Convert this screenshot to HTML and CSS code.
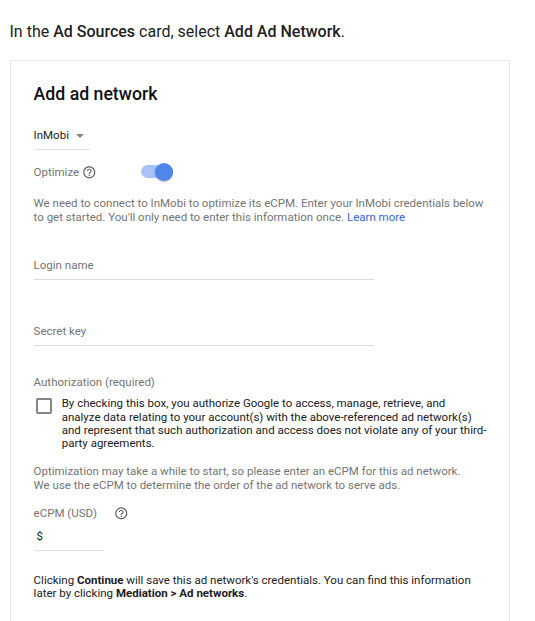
FILE: index.html
```html
<!DOCTYPE html>
<html lang="en">

<head>
  <meta charset="UTF-8">
  <meta name="viewport" content="width=device-width, initial-scale=1.0">
  <title>Add ad network</title>
  <link rel="stylesheet" href="styles.css">
</head>

<body>
  <p class="step">In the <b>Ad Sources</b> card, select <b>Add Ad Network</b>.</p>
  <div class="card">
    <h2 class="title">Add ad network</h2>
    <div class="select">InMobi <span class="arrow"></span></div>
    <div class="optimize">
      <span class="label">Optimize</span>
      <svg class="help" viewBox="0 0 24 24"><path d="M11 18h2v-2h-2v2zm1-16C6.480 2 2 6.480 2 12s4.480 10 10 10 10-4.480 10-10S17.520 2 12 2zm0 18c-4.410 0-8-3.590-8-8s3.590-8 8-8 8 3.590 8 8-3.590 8-8 8zm0-14c-2.210 0-4 1.790-4 4h2c0-1.100.9-2 2-2s2 .9 2 2c0 2-3 1.750-3 5h2c0-2.250 3-2.500 3-5 0-2.210-1.790-4-4-4z"/></svg>
      <span class="toggle"><span class="knob"></span></span>
    </div>
    <p class="note intro">We need to connect to InMobi to optimize its eCPM. Enter your InMobi credentials below<br>to get started. You'll only need to enter this information once. <a class="link">Learn more</a></p>
    <div class="field">Login name</div>
    <div class="field secret">Secret key</div>
    <div class="label auth">Authorization (required)</div>
    <div class="consent">
      <span class="checkbox"></span>
      <p class="consent-text">By checking this box, you authorize Google to access, manage, retrieve, and<br>analyze data relating to your account(s) with the above-referenced ad network(s)<br>and represent that such authorization and access does not violate any of your third-<br>party agreements.</p>
    </div>
    <p class="note wait">Optimization may take a while to start, so please enter an eCPM for this ad network.<br>We use the eCPM to determine the order of the ad network to serve ads.</p>
    <div class="ecpm">
      <span class="label">eCPM (USD)</span>
      <svg class="help" viewBox="0 0 24 24"><path d="M11 18h2v-2h-2v2zm1-16C6.480 2 2 6.480 2 12s4.480 10 10 10 10-4.480 10-10S17.520 2 12 2zm0 18c-4.410 0-8-3.590-8-8s3.590-8 8-8 8 3.590 8 8-3.590 8-8 8zm0-14c-2.210 0-4 1.790-4 4h2c0-1.100.9-2 2-2s2 .9 2 2c0 2-3 1.750-3 5h2c0-2.250 3-2.500 3-5 0-2.210-1.790-4-4-4z"/></svg>
    </div>
    <div class="price">$</div>
    <p class="footer">Clicking <b>Continue</b> will save this ad network's credentials. You can find this information<br>later by clicking <b>Mediation &gt; Ad networks</b>.</p>
  </div>
</body>

</html>
```
FILE: styles.css
```css
body {
  margin: 0;
  height: 621px;
  overflow: hidden;
  background-color: #fff;
  font-family: Roboto, sans-serif;
  font-size: 11.5px;
  line-height: 13.3px;
  color: #212121;
}

p {
  margin: 0;
  white-space: nowrap;
}

b {
  font-weight: 500;
}

.step {
  padding: 22px 0 0 9.5px;
  font-size: 16px;
  line-height: 20px;
}

.card {
  box-sizing: border-box;
  width: 500px;
  height: 580px;
  margin: 18px 0 0 10px;
  padding: 0 22.6px;
  border: 1px solid #e6e6e6;
}

.title {
  margin: 0;
  padding-top: 22px;
  font-size: 17.7px;
  font-weight: 500;
  line-height: 22px;
  color: #111;
}

.select {
  display: flex;
  align-items: center;
  justify-content: space-between;
  box-sizing: border-box;
  width: 56px;
  height: 21px;
  margin-top: 24px;
  padding: 0 6px 7px 0;
  border-bottom: 1px solid #e0e0e0;
}

.arrow {
  border: 4px solid transparent;
  border-top: 4px solid #858585;
  border-bottom: 0;
}

.optimize {
  display: flex;
  align-items: center;
  height: 21px;
  margin-top: 12px;
}

.label,
.note {
  color: #757575;
}

.help {
  width: 14.5px;
  height: 14.5px;
  margin: -1px 0 0 2.5px;
  fill: #616161;
}

.toggle {
  display: flex;
  justify-content: flex-end;
  align-items: center;
  width: 32px;
  height: 13px;
  margin: -2px 0 0 45px;
  border-radius: 7px;
  background-color: #a7c3f8;
}

.knob {
  width: 18px;
  height: 18px;
  border-radius: 50%;
  background-color: #4f86ec;
  box-shadow: 0 1px 2px rgba(0, 0, 0, 0.3);
}

.intro {
  margin-top: 14.4px;
}

.link {
  color: #3367d6;
}

.field {
  box-sizing: border-box;
  width: 340px;
  height: 21px;
  margin-top: 35px;
  border-bottom: 1px solid #dcdcdc;
  color: #757575;
}

.secret {
  margin-top: 45px;
}

.auth {
  margin-top: 30px;
}

.consent {
  display: flex;
  gap: 10px;
  margin-top: 8px;
}

.checkbox {
  box-sizing: border-box;
  width: 16px;
  height: 16px;
  margin: 1px 0 0 2.4px;
  border: 2px solid #858585;
  border-radius: 2px;
}

.wait {
  margin-top: 15px;
}

.ecpm {
  display: flex;
  align-items: center;
  gap: 14px;
  height: 14px;
  margin-top: 14.4px;
}

.price {
  box-sizing: border-box;
  width: 70px;
  height: 21px;
  margin-top: 9.6px;
  padding-left: 3px;
  border-bottom: 1px solid #e0e0e0;
}

.footer {
  margin-top: 23px;
}

.footer b {
  font-weight: 700;
}
```
